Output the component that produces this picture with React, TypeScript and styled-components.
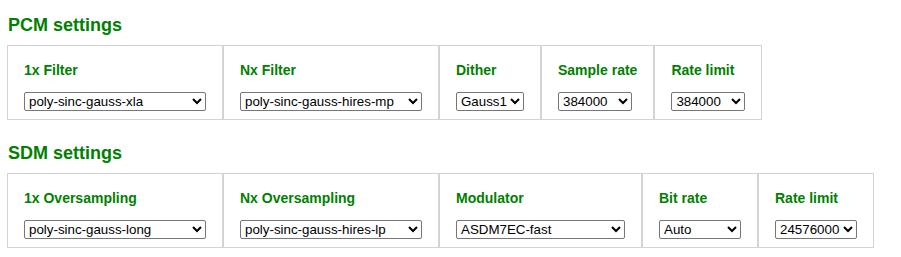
import React from "react";
import styled, { createGlobalStyle } from "styled-components";

const Global = createGlobalStyle`
  html, body { margin: 0; padding: 0; background: #ffffff; }
  body { font-family: "Liberation Sans", Arial, sans-serif; }
`;

const Page = styled.div`
  padding: 15px 0 0 7px;
  display: flex;
  flex-direction: column;
  align-items: flex-start;
`;

const Heading = styled.h3`
  margin: 0 0 9px 1px;
  font-size: 18px;
  line-height: 21px;
  font-weight: bold;
  color: #008000;
`;

const Table = styled.div`
  display: flex;
  margin-bottom: 23px;

  &:last-child {
    margin-bottom: 0;
  }
`;

const Cell = styled.div`
  display: flex;
  flex-direction: column;
  align-items: flex-start;
  border: 1px solid #d3d3d3;
  padding: 16px 16px 8px 16px;
`;

const Label = styled.div`
  font-size: 14px;
  line-height: 16px;
  font-weight: bold;
  color: #008000;
  margin-bottom: 14px;
  white-space: nowrap;
`;

const Select = styled.select<{ $w: number }>`
  width: ${(p) => p.$w}px;
  height: 19px;
  font-family: "Liberation Sans", Arial, sans-serif;
  font-size: 13.33px;
  color: #000;
  background: #fff;
  border: 1px solid #767676;
  border-radius: 2px;
  margin: 0;
`;

type Field = { label: string; value: string; options: string[]; width: number };

const pcm: Field[] = [
  {
    label: "1x Filter",
    value: "poly-sinc-gauss-xla",
    options: ["poly-sinc-gauss-xla", "poly-sinc-gauss-long", "poly-sinc-gauss-hires-mp"],
    width: 182,
  },
  {
    label: "Nx Filter",
    value: "poly-sinc-gauss-hires-mp",
    options: ["poly-sinc-gauss-hires-mp", "poly-sinc-gauss-hires-lp", "poly-sinc-gauss-xla"],
    width: 182,
  },
  { label: "Dither", value: "Gauss1", options: ["Gauss1", "TPDF", "None"], width: 68 },
  { label: "Sample rate", value: "384000", options: ["384000", "352800", "192000"], width: 74 },
  { label: "Rate limit", value: "384000", options: ["384000", "352800", "192000"], width: 74 },
];

const sdm: Field[] = [
  {
    label: "1x Oversampling",
    value: "poly-sinc-gauss-long",
    options: ["poly-sinc-gauss-long", "poly-sinc-gauss-xla", "poly-sinc-gauss-hires-lp"],
    width: 182,
  },
  {
    label: "Nx Oversampling",
    value: "poly-sinc-gauss-hires-lp",
    options: ["poly-sinc-gauss-hires-lp", "poly-sinc-gauss-hires-mp", "poly-sinc-gauss-long"],
    width: 182,
  },
  {
    label: "Modulator",
    value: "ASDM7EC-fast",
    options: ["ASDM7EC-fast", "ASDM7EC", "ASDM5EC"],
    width: 169,
  },
  { label: "Bit rate", value: "Auto", options: ["Auto", "DSD64", "DSD128", "DSD256"], width: 82 },
  {
    label: "Rate limit",
    value: "24576000",
    options: ["24576000", "12288000", "6144000"],
    width: 82,
  },
];

function SettingsTable({ fields }: { fields: Field[] }) {
  return (
    <Table>
      {fields.map((f) => (
        <Cell key={f.label}>
          <Label>{f.label}</Label>
          <Select $w={f.width} defaultValue={f.value}>
            {f.options.map((o) => (
              <option key={o} value={o}>
                {o}
              </option>
            ))}
          </Select>
        </Cell>
      ))}
    </Table>
  );
}

export default function App() {
  return (
    <>
      <Global />
      <Page>
        <Heading>PCM settings</Heading>
        <SettingsTable fields={pcm} />
        <Heading>SDM settings</Heading>
        <SettingsTable fields={sdm} />
      </Page>
    </>
  );
}
